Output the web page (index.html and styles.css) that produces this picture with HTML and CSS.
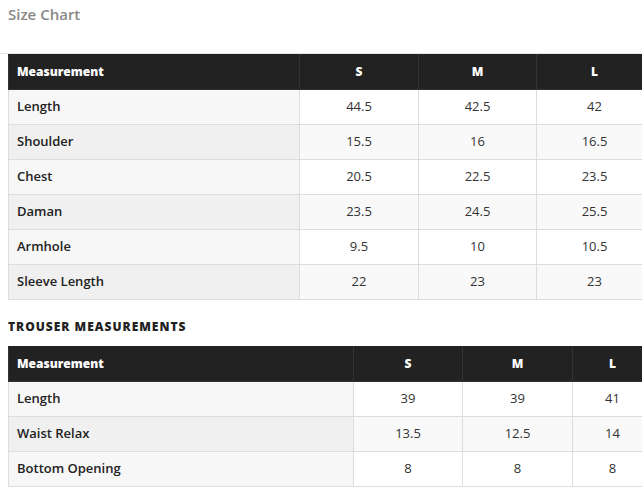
FILE: index.html
```html
<!DOCTYPE html>
<html>
<head>
<meta charset="utf-8">
<link rel="stylesheet" href="styles.css">
</head>
<body>
<h2 class="title">Size Chart</h2>
<div class="wrap">
<div class="clip">
<table class="chart">
<colgroup><col class="c1a"><col class="c2a"><col class="c3a"><col class="c4a"></colgroup>
<thead><tr><th class="lbl">Measurement</th><th>S</th><th>M</th><th>L</th></tr></thead>
<tbody>
<tr><td class="lbl">Length</td><td>44.5</td><td>42.5</td><td>42</td></tr>
<tr><td class="lbl">Shoulder</td><td>15.5</td><td>16</td><td>16.5</td></tr>
<tr><td class="lbl">Chest</td><td>20.5</td><td>22.5</td><td>23.5</td></tr>
<tr><td class="lbl">Daman</td><td>23.5</td><td>24.5</td><td>25.5</td></tr>
<tr><td class="lbl">Armhole</td><td>9.5</td><td>10</td><td>10.5</td></tr>
<tr><td class="lbl">Sleeve Length</td><td>22</td><td>23</td><td>23</td></tr>
</tbody>
</table>
</div>
</div>
<h3 class="sub">TROUSER MEASUREMENTS</h3>
<div class="clip">
<table class="chart">
<colgroup><col class="c1b"><col class="c2b"><col class="c3b"><col class="c4b"></colgroup>
<thead><tr><th class="lbl">Measurement</th><th>S</th><th>M</th><th>L</th></tr></thead>
<tbody>
<tr><td class="lbl">Length</td><td>39</td><td>39</td><td>41</td></tr>
<tr><td class="lbl">Waist Relax</td><td>13.5</td><td>12.5</td><td>14</td></tr>
<tr><td class="lbl">Bottom Opening</td><td>8</td><td>8</td><td>8</td></tr>
</tbody>
</table>
</div>
</body>
</html>
```
FILE: styles.css
```css
html, body { overflow: hidden; }
body {
  margin: 0;
  padding: 0 0 0 8px;
  font-family: "Open Sans", "Liberation Sans", sans-serif;
  color: #222;
  background: #fff;
}
.title {
  margin: 0;
  padding-top: 4px;
  height: 53px;
  font-size: 15px;
  font-weight: 600;
  color: #888;
  line-height: 20px;
  box-sizing: border-box;
}
.wrap {
  margin-left: -8px;
  padding-left: 8px;
  border-top: 1px solid #e6e6e6;
}
.clip {
  overflow: hidden;
}
.chart {
  border-collapse: collapse;
  table-layout: fixed;
  width: 644px;
  font-size: 13px;
}
.c1a { width: 291px; } .c2a { width: 119px; } .c3a { width: 118px; } .c4a { width: 116px; }
.c1b { width: 345px; } .c2b { width: 109px; } .c3b { width: 110px; } .c4b { width: 80px; }
.chart th {
  background: #222;
  color: #fff;
  font-weight: 800;
  font-size: 12px;
  height: 32px;
  padding: 0 8px 2px;
  border: 1px solid #333;
  border-top-color: #222;
  text-align: center;
}
.chart td {
  height: 32px;
  padding: 0 8px 2px;
  border: 1px solid #ddd;
  text-align: center;
  color: #333;
  background: #fff;
}
.chart .lbl { text-align: left; }
.chart td.lbl { font-weight: 600; color: #222; background: #f7f7f7; }
.chart tbody tr:nth-child(even) td { background: #f9f9f9; }
.chart tbody tr:nth-child(even) td.lbl { background: #f0f0f0; }
.sub {
  margin: 0;
  height: 46px;
  padding-top: 20px;
  box-sizing: border-box;
  font-size: 12px;
  font-weight: 800;
  letter-spacing: 1px;
  line-height: 14px;
  color: #222;
}
```
